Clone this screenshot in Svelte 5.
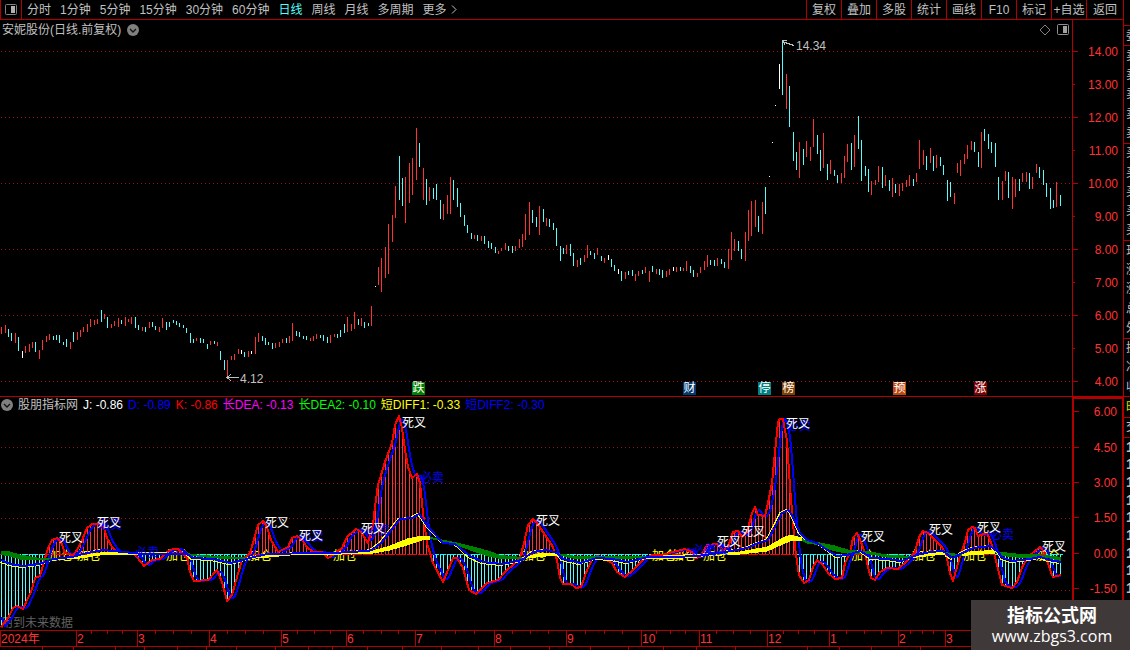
<script lang="ts">
	type Point = [number, number];

	const periods = ['分时', '1分钟', '5分钟', '15分钟', '30分钟', '60分钟', '日线', '周线', '月线', '多周期'];
	const tools = ['复权', '叠加', '多股', '统计', '画线', 'F10', '标记', '+自选', '返回'];
	let activePeriod = $state('日线');

	const WIDTH = 1072;
	const STEP = 3.426;
	const PRICE_TOP = 20;
	const PRICE_HEIGHT = 376;
	const IND_TOP = 397;
	const IND_HEIGHT = 233;
	const ZERO = 554;

	// r = up day, c = down day, w = unchanged; then the y of high and low
	const barData = `
		r327-334 r325-333 c329-337 c333-341 r333-343 c337-351 w351-358 r346-353 r344-352 r342-348
		c342-352 r350-359 r340-350 r336-342 r334-340 c336-340 c335-340 c335-343 c342-345 c339-347
		r342-349 c332-342 r332-340 r330-337 r327-332 r324-332 r319-327 r320-325 r319-324 c310-322
		r314-319 c317-328 r324-328 r321-326 r318-327 c320-324 r317-326 r319-322 r317-324 c317-328
		c325-330 r327-331 c327-332 r322-328 c322-327 c326-330 r327-332 r318-328 c322-330 c322-327
		c320-323 c321-325 c323-327 c325-328 c328-333 c333-343 c339-343 r338-341 c338-343 c339-343
		c344-349 r341-345 c341-344 r342-346 c351-360 c360-370 r360-376 r356-360 r354-360 r349-354
		w350-354 c352-357 r351-357 w351-354 r337-354 r333-342 c336-341 c338-345 c342-345 c343-349
		r343-348 r342-347 r339-343 c338-343 r336-343 r323-341 c331-336 c332-337 c336-339 c336-340
		r338-341 r336-341 r334-339 c335-338 c335-341 c337-343 r335-343 r334-337 c334-338 c330-337
		c324-333 r317-332 r324-331 r312-329 c319-325 r318-326 c322-328 c323-326 r306-326
		w286-287 r267-285 r258-292 r247-278 r224-274 r215-242 r186-218 c156-200 c178-206 r177-223
		r163-203 r158-195 r128-180 c143-167 r168-200 c179-205 r187-201 c188-199 c184-200 c200-219
		r204-220 r195-214 r177-214 c180-200 c188-207 c203-217 c215-226 c225-233 c233-239 r235-239
		c235-241 r236-241 c236-244 c241-248 c243-249 c247-253 r251-254 r248-251 r243-250 c246-251
		c246-253 r246-251 r239-248 r234-247 r214-240 r202-235 c210-223 c217-227 r206-235 c209-222
		r218-226 c219-227 c223-230 c228-246 c246-261 c248-254 r245-254 c244-256 c253-266 r260-267
		c258-265 r255-262 r245-258 c251-255 c253-259 r248-255 c256-261 r258-263 w255-260 c259-267
		c265-271 w269-274 c271-281 r272-279 c271-275 c270-276 r274-281 r271-276 c270-274 r267-273
		r271-282 c266-272 r269-274 c269-275 c270-278 r271-277 r269-275 w267-271 r267-272 c267-271
		r268-271 r261-271 c266-273 c270-277 r273-277 r267-273 r261-270 r255-267 c260-265 c260-266
		r258-266 c259-264 c262-268 r249-269 r232-260 r239-251 c241-251 c249-259 r232-261 r210-241
		r201-236 r200-227 c216-232 r202-234 c187-214 w176-177 w142-143 w105-106 w64-89 c42-95
		r74-109 c86-127 c132-161 c152-170 r142-178 c149-165 r141-157 r147-161 r119-147 c135-154
		c150-171 r133-168 c164-180 r160-174 c170-176 c175-183 r173-183 r156-178 r144-162 c143-170
		r135-167 c116-149 c140-181 c166-176 c169-192 r181-195 r180-185 r166-182 c167-188 r175-186
		c180-191 r178-197 c184-193 r184-196 r183-191 r180-187 r175-186 c179-186 r173-182 r140-169
		r150-165 c156-170 r148-163 c156-171 r155-168 c157-166 c165-175 c180-201 c182-197 r193-204
		r163-173 r160-176 r154-164 r145-159 r141-150 c142-152 c152-167 r132-168 c129-141 c134-149
		c142-153 c143-167 c177-200 r181-200 r171-181 c172-198 r177-209 r179-197 c179-191 r173-182
		r172-182 c173-189 r177-189 r164-173 c167-178 c170-185 c183-197 c188-209 c200-208 r182-207
		c195-206`;

	const bars = barData
		.trim()
		.split(/\s+/)
		.map((entry, i) => {
			const [high, low] = entry.slice(1).split('-').map(Number);
			return { kind: entry[0], x: Math.round(1.2 + i * STEP) + 0.5, high, low };
		});

	function parsePoints(text: string): Point[] {
		return text
			.trim()
			.split(/\s+/)
			.map((p) => p.split(',').map(Number) as Point);
	}

	const jLine = parsePoints(`
		1,627 8,618 13,608 17,606 23,609 27,600 31,592 35,578 40,576 43,565 48,548 52,540 57,538 61,542
		65,553 73,555 77,550 82,540 87,528 92,524 100,524 104,528 107,538 112,547 117,552 133,553 137,557
		144,566 152,560 160,559 167,552 173,549 178,549 187,558 190,572 194,581 208,580 217,570 222,582
		227,601 232,595 237,577 242,560 250,553 253,543 258,525 263,521 267,527 271,540 278,552 288,547
		292,538 297,536 302,540 307,547 313,552 322,552 328,558 333,555 342,548 347,537 356,529 361,532
		368,543 373,525 375,507 378,485 385,462 392,443 395,425 399,416 402,428 405,450 408,467 412,478
		417,474 420,483 423,513 427,543 433,563 443,582 448,570 453,558 457,558 463,568 469,590 476,594
		487,583 498,580 507,570 513,565 520,558 524,543 528,525 533,519 537,523 543,532 553,547 557,560
		560,578 563,584 571,584 576,588 581,587 587,570 592,560 597,556 605,559 612,563 617,572 625,577
		633,570 643,560 652,555 663,555 673,552 685,549 692,552 695,558 700,557 707,545 717,544 723,550
		728,547 733,532 738,531 742,537 747,532 752,513 755,507 758,515 765,516 768,503 772,483 775,452
		778,422 780,419 783,419 784,425 787,440 790,487 793,523 795,547 799,575 804,583 809,580 813,567
		817,560 823,565 828,573 835,579 842,578 845,563 850,553 853,538 857,533 861,542 865,553 868,567
		871,578 875,580 880,572 887,568 898,569 907,561 915,552 919,537 923,531 928,533 933,538 942,547
		947,558 950,573 953,581 957,567 961,553 965,542 968,530 972,527 975,528 978,536 987,533 992,545
		997,565 1002,585 1012,588 1017,582 1023,565 1030,555 1040,547 1045,553 1050,570 1053,577 1061,575`);

	const diffLine = parsePoints(`
		1,560 10,564 23,566 33,565 43,563 53,559 72,557 87,553 103,550 133,553 143,554 187,554 193,558
		213,559 230,563 240,561 250,558 267,554 317,553 333,553 367,551 372,550 382,542 400,519 412,518
		419,514 428,527 443,543 455,544 470,556 483,562 503,564 522,560 533,552 547,550 557,553 563,559
		580,563 597,558 613,559 627,562 633,561 648,557 673,557 697,556 720,553 747,548 758,543 768,540
		775,527 782,513 788,510 792,515 800,533 807,540 817,543 827,550 837,556 847,555 860,551 872,558
		887,559 902,561 917,555 930,552 943,551 948,555 953,558 962,553 973,548 990,546 998,552 1003,558
		1013,561 1030,559 1040,557 1050,560 1061,562`);

	// x, centre y, thickness
	const bands = [
		{ kind: 'falling', data: '1,553,3 10,554,4 20,557,4 37,559,2 52,559,1' },
		{ kind: 'rising', data: '52,559,1 80,557,2 100,554,2 127,553,2 187,554,1' },
		{ kind: 'falling', data: '187,554,1 200,556,1 230,558,2 247,558,1' },
		{ kind: 'rising', data: '247,558,1 263,556,3 290,554,2 333,554,1 350,553,1 373,552,2 390,548,4 407,542,6 422,538,4 430,538,2' },
		{ kind: 'falling', data: '430,538,1 440,540,1 457,544,2 473,549,4 490,554,5 500,557,3 522,558,1' },
		{ kind: 'rising', data: '522,558,1 540,555,3 557,554,2' },
		{ kind: 'falling', data: '557,554,1 573,557,2 593,558,2 653,557,1' },
		{ kind: 'rising', data: '653,557,1 703,555,2 740,553,2 767,549,4 783,541,6 790,538,6 802,539,2' },
		{ kind: 'falling', data: '802,540,1 807,542,2 820,544,2 833,548,5 850,552,3 870,553,2 887,556,2 913,557,1' },
		{ kind: 'rising', data: '913,557,1 930,554,3 945,553,2' },
		{ kind: 'falling', data: '945,553,1 955,555,2 962,555,1' },
		{ kind: 'rising', data: '962,555,1 973,553,3 995,552,3' },
		{ kind: 'falling', data: '995,552,1 1003,554,3 1020,556,3 1040,556,2 1050,557,2 1061,559,3' }
	];

	function valueAt(line: Point[], x: number): number {
		if (x <= line[0][0]) return line[0][1];
		for (let i = 1; i < line.length; i++) {
			const [x1, y1] = line[i];
			if (x <= x1) {
				const [x0, y0] = line[i - 1];
				return y0 + ((y1 - y0) * (x - x0)) / (x1 - x0);
			}
		}
		return line[line.length - 1][1];
	}

	function toPath(line: Point[]): string {
		return 'M' + line.map(([x, y]) => x + ' ' + y).join('L');
	}

	function bandPath(data: string): string {
		const rows = data.split(' ').map((p) => p.split(',').map(Number));
		const upper = rows.map(([x, y, t]) => x + ' ' + (y - t / 2 - 0.5));
		const lower = rows.map(([x, y, t]) => x + ' ' + (y + t / 2 + 0.5)).reverse();
		return 'M' + [...upper, ...lower].join('L') + 'Z';
	}

	// D is J smoothed over the previous bars
	const dLine: Point[] = [];
	for (let x = 1; x <= 1061; x += 2) {
		const taps = [2, 3, 4, 5, 6].map((lag) => valueAt(jLine, x - lag));
		dLine.push([x, x < 5 ? 617 + x : taps.reduce((a, b) => a + b) / taps.length]);
	}
	const diffFast = diffLine.map(([x, y]) => [x - 2, y > ZERO ? y + 1.5 : y - 0.5] as Point);
	const stems = bars.map(({ x }) => ({ x, y: valueAt(jLine, x) }));

	const priceTicks = Array.from({ length: 11 }, (_, i) => ({
		label: (14 - i).toFixed(2),
		y: 51 + i * 33,
		major: i % 2 === 0
	}));
	const indTicks = [6, 4.5, 3, 1.5, 0, -1.5].map((v, i) => ({
		label: v.toFixed(2),
		y: [411, 447, 483, 518, 554, 590][i]
	}));

	const badges = [
		{ text: '跌', x: 412, color: '#008000' },
		{ text: '财', x: 683, color: '#003a70' },
		{ text: '停', x: 758, color: '#008080' },
		{ text: '榜', x: 782, color: '#804000' },
		{ text: '预', x: 893, color: '#c04810' },
		{ text: '涨', x: 974, color: '#800000' }
	];

	const legend = [
		{ text: 'J: -0.86', color: '#ffffff' },
		{ text: 'D: -0.89', color: '#0000ff' },
		{ text: 'K: -0.86', color: '#ff0000' },
		{ text: '长DEA: -0.13', color: '#ff00ff' },
		{ text: '长DEA2: -0.10', color: '#00ff00' },
		{ text: '短DIFF1: -0.33', color: '#ffff00' },
		{ text: '短DIFF2: -0.30', color: '#0000ff' }
	];

	const addSignals = parsePoints('49,549 77,549 166,549 248,549 333,549 522,549 652,549 672,549 703,549 851,549 912,549 963,549 1036,549');
	const signals = [
		{ text: '必卖', kind: 'sell', at: parsePoints('98,518 135,546 300,530 366,524 420,471 692,544 704,543 787,419 990,528') },
		{ text: '死叉', kind: 'cross', at: parsePoints('59,531 97,516 265,516 299,529 361,522 402,416 536,514 717,535 741,525 786,417 861,530 929,523 977,521 1042,540') }
	];

	const months = [
		{ text: '2024年', x: 0 },
		{ text: '2', x: 76 },
		{ text: '3', x: 137 },
		{ text: '4', x: 209 },
		{ text: '5', x: 281 },
		{ text: '6', x: 346 },
		{ text: '7', x: 415 },
		{ text: '8', x: 494 },
		{ text: '9', x: 566 },
		{ text: '10', x: 641 },
		{ text: '11', x: 699 },
		{ text: '12', x: 767 },
		{ text: '1', x: 829 },
		{ text: '2', x: 898 },
		{ text: '3', x: 945 },
		{ text: '', x: 1072 }
	];
	const minorTicks = months
		.slice(1)
		.flatMap(({ x }, i) => [0.25, 0.5, 0.75].map((f) => Math.round(months[i].x + (x - months[i].x) * f)))
		.filter((x) => x > 76);
	const footTicks = [42, 73, 115, 144, 177, 206, 236, 275, 308, 332, 367, 402, 441, 478, 510, 549, 590, 628, 663, 696, 735, 807, 839, 871, 920];

	const quoteGroups = [
		{ size: 1, rows: ['委'] },
		{ size: 5, rows: ['卖', '卖', '卖', '卖', '卖'] },
		{ size: 5, rows: ['买', '买', '买', '买', '买'] },
		{ size: 5, rows: ['现', '涨', '涨', '总', '外'] },
		{ size: 3, rows: ['换', '净', '收'] }
	];

	const left = (x: number) => (x / WIDTH) * 100 + '%';
	const priceY = (y: number) => ((y - PRICE_TOP) / PRICE_HEIGHT) * 100 + '%';
	const indY = (y: number) => ((y - IND_TOP) / IND_HEIGHT) * 100 + '%';
</script>

<div class="app">
	<main class="main">
		<nav class="toolbar">
			<button class="layout-button" aria-label="布局">
				<svg width="12" height="11" viewBox="0 0 12 11">
					<rect x="0.5" y="0.5" width="11" height="10" rx="1" fill="none" stroke="#808080" />
					<rect x="6" y="2" width="4" height="7" fill="#b0b0b0" />
				</svg>
			</button>
			<div class="periods">
				{#each periods as period}
					<button class:active={period === activePeriod} onclick={() => (activePeriod = period)}>{period}</button>
				{/each}
				<button class="more">
					更多
					<svg width="6" height="9" viewBox="0 0 6 9"><path d="M1 0.5L5 4.5L1 8.5" fill="none" stroke="#c0c0c0" /></svg>
				</button>
			</div>
			<div class="tools">
				{#each tools as tool}
					<button>{tool}</button>
				{/each}
			</div>
		</nav>

		<section class="panel price">
			<div class="plot">
				<svg class="chart" viewBox="0 {PRICE_TOP} {WIDTH} {PRICE_HEIGHT}" preserveAspectRatio="none">
					{#each priceTicks.filter((t) => t.major) as tick}
						<line class="grid" x1="1" x2={WIDTH} y1={tick.y + 0.5} y2={tick.y + 0.5} />
					{/each}
					{#each bars as bar}
						<line class="bar {bar.kind}" x1={bar.x} x2={bar.x} y1={bar.high} y2={bar.low} />
					{/each}
					<path class="pointer" d="M782 41.5L794 45.5M782 40.5H787M784 42V45" />
					<path class="pointer" d="M228 377.5H239M231 374.5L227 377.5L231 380.5" />
				</svg>
				<header class="title">
					<span>安妮股份(日线.前复权)</span>
					<button class="round" aria-label="展开">
						<svg width="12" height="12" viewBox="0 0 12 12">
							<circle cx="6" cy="6" r="6" fill="#808080" />
							<path d="M3 5L6 8L9 5" fill="none" stroke="#111" stroke-width="1.3" />
						</svg>
					</button>
					<svg class="corner" width="30" height="12" viewBox="0 0 30 12">
						<path d="M6 1L11 6L6 11L1 6Z" fill="none" stroke="#808080" />
						<rect x="18.5" y="0.5" width="11" height="10" rx="1" fill="none" stroke="#909090" />
						<rect x="24" y="2" width="4" height="7" fill="#a0a0a0" />
					</svg>
				</header>
				<span class="mark" style="left: {left(796)}; top: {priceY(46)}">14.34</span>
				<span class="mark" style="left: {left(240)}; top: {priceY(379)}">4.12</span>
				{#each badges as badge}
					<span class="badge" style="left: {left(badge.x)}; background: {badge.color}">{badge.text}</span>
				{/each}
			</div>
			<div class="axis">
				{#each priceTicks as tick}
					<span class="tick" class:minor={!tick.major} style="top: {priceY(tick.y + 0.5)}">{tick.label}</span>
				{/each}
			</div>
		</section>

		<section class="panel indicator">
			<div class="plot">
				<span class="notice">用到未来数据</span>
				{#each addSignals as [x, y]}
					<span class="signal add" style="left: {left(x)}; top: {indY(y)}">加仓</span>
				{/each}
				<svg class="chart" viewBox="0 {IND_TOP} {WIDTH} {IND_HEIGHT}" preserveAspectRatio="none">
					{#each indTicks as tick}
						{#if tick.y !== 411 && tick.y !== ZERO}
							<line class="grid" x1="1" x2={WIDTH} y1={tick.y + 0.5} y2={tick.y + 0.5} />
						{/if}
					{/each}
					{#each stems as stem}
						<line class="stem" class:below={stem.y > ZERO} x1={stem.x} x2={stem.x} y1={ZERO} y2={stem.y} />
					{/each}
					<line class="zero" x1="0" x2="1062" y1={ZERO + 0.5} y2={ZERO + 0.5} />
					{#each stems.filter((s) => s.y > ZERO + 1) as stem}
						<line class="zero-below" x1={stem.x - 1} x2={stem.x + 2} y1={ZERO + 0.5} y2={ZERO + 0.5} />
					{/each}
					<path class="d-line" d={toPath(dLine)} />
					<path class="j-line" d={toPath(jLine)} />
					{#each bands as band}
						<path class={band.kind} d={bandPath(band.data)} />
					{/each}
					<path class="diff-fast" d={toPath(diffFast)} />
					<path class="diff-slow" d={toPath(diffLine)} />
				</svg>
				{#each signals as signal}
					{#each signal.at as [x, y]}
						<span class="signal {signal.kind}" style="left: {left(x)}; top: {indY(y)}">{signal.text}</span>
					{/each}
				{/each}
				<header class="legend">
					<button class="round" aria-label="指标">
						<svg width="12" height="12" viewBox="0 0 12 12">
							<circle cx="6" cy="6" r="6" fill="#808080" />
							<path d="M3 5L6 8L9 5" fill="none" stroke="#111" stroke-width="1.3" />
						</svg>
					</button>
					<span>股朋指标网</span>
					{#each legend as item}
						<span style="color: {item.color}">{item.text}</span>
					{/each}
				</header>
			</div>
			<div class="axis framed">
				{#each indTicks as tick}
					<span class="tick" style="top: {indY(tick.y - 1)}">{tick.label}</span>
				{/each}
			</div>
		</section>

		<div class="timeline">
			<div class="months">
				{#each minorTicks as x}
					<i style="left: {left(x)}"></i>
				{/each}
				{#each months as month}
					<span class="month" style="left: {left(month.x)}">{month.text}</span>
				{/each}
			</div>
		</div>
		<div class="foot">
			{#each footTicks as x}
				<i style="left: {left(x)}"></i>
			{/each}
		</div>
	</main>

	<aside class="quotes">
		<div class="quote-head"></div>
		{#each quoteGroups as group}
			<div class="group" style="flex-grow: {group.size}">
				{#each group.rows as row}
					<span>{row}</span>
				{/each}
			</div>
		{/each}
		<div class="group tab" style="flex-grow: 1"><span>时</span></div>
		<div class="group" style="flex-grow: 1"><span>交</span></div>
		<div class="group times" style="flex-grow: 11">
			{#each Array(12) as _}
				<span>1</span>
			{/each}
		</div>
	</aside>

	<a class="watermark" href="#top">
		<strong>指标公式网</strong>
		<span>www.zbgs3.com</span>
	</a>
</div>

<style>
	:global(body) {
		margin: 0;
		background: #000;
	}

	.app {
		display: flex;
		min-height: 100vh;
		position: relative;
		overflow: hidden;
		background: #000;
		color: #c0c0c0;
		font-family: 'Liberation Sans', 'Noto Sans CJK SC', sans-serif;
		font-size: 12px;
		line-height: 14px;
		white-space: nowrap;
	}

	button {
		padding: 0;
		border: none;
		background: none;
		color: inherit;
		font: inherit;
		cursor: pointer;
	}

	svg {
		display: block;
	}

	.main {
		flex: 1;
		min-width: 0;
		display: flex;
		flex-direction: column;
	}

	.toolbar {
		display: flex;
		height: 19px;
		border-bottom: 1px solid #b00000;
	}

	.layout-button {
		display: flex;
		align-items: center;
		justify-content: center;
		width: 22px;
		box-sizing: border-box;
		border: 1px solid #b00000;
		border-width: 0 1px;
	}

	.periods {
		display: flex;
		align-items: center;
		gap: 9px;
		padding-left: 5px;
	}

	.active {
		color: #54fcfc;
	}

	.more {
		display: flex;
		align-items: center;
		gap: 4px;
	}

	.tools {
		display: flex;
		margin-left: auto;
	}

	.tools button {
		width: 35px;
		box-sizing: border-box;
		border-left: 1px solid #b00000;
	}

	.tools button:last-child {
		width: 37px;
	}

	.panel {
		display: flex;
		min-height: 0;
	}

	.price {
		flex: 376 1 0;
		border-bottom: 1px solid #b00000;
	}

	.indicator {
		flex: 233 1 0;
	}

	.plot {
		flex: 1;
		min-width: 0;
		position: relative;
	}

	.chart {
		position: absolute;
		inset: 0;
		width: 100%;
		height: 100%;
		shape-rendering: crispEdges;
	}

	.grid {
		stroke: #a01010;
		stroke-dasharray: 1 3;
	}

	.bar.r {
		stroke: #ff3232;
	}

	.bar.c {
		stroke: #54fcfc;
	}

	.bar.w {
		stroke: #fff;
	}

	.pointer {
		fill: none;
		stroke: #c0c0c0;
	}

	.title,
	.legend {
		position: absolute;
		top: 0;
		left: 0;
		right: 0;
		display: flex;
		align-items: center;
	}

	.title {
		gap: 6px;
		height: 19px;
		padding: 0 3px 0 2px;
	}

	.corner {
		margin-left: auto;
	}

	.legend {
		gap: 5px;
		height: 16px;
		padding-left: 1px;
	}

	.mark {
		position: absolute;
		transform: translateY(-50%);
	}

	.badge {
		position: absolute;
		bottom: 1px;
		width: 13px;
		height: 13px;
		line-height: 13px;
		text-align: center;
		color: #fff;
	}

	.axis {
		position: relative;
		width: 50px;
		border-left: 1px solid #b00000;
		color: #ff3232;
	}

	.axis.framed {
		width: 48px;
		border: 2px solid #b00000;
		border-width: 2px 1px 0 2px;
	}

	.tick {
		position: absolute;
		left: 0;
		right: 5px;
		transform: translateY(-50%);
		text-align: right;
	}

	.tick::before {
		content: '';
		position: absolute;
		left: 0;
		top: 6px;
		width: 5px;
		height: 1px;
		background: #b00000;
	}

	.tick.minor::before {
		width: 2px;
	}

	.stem {
		stroke: #ff3232;
	}

	.stem.below {
		stroke: #54fcfc;
	}

	.zero {
		stroke: #ff0000;
		stroke-dasharray: 10 1;
	}

	.zero-below {
		stroke: #00ffff;
	}

	.d-line,
	.j-line,
	.diff-fast,
	.diff-slow {
		fill: none;
		stroke-width: 2px;
		stroke-linejoin: round;
	}

	.d-line,
	.diff-slow {
		stroke: #0000ff;
	}

	.j-line {
		stroke: #ff0000;
	}

	.diff-fast {
		stroke: #ffff00;
		stroke-width: 1px;
	}

	.rising {
		fill: #ffff00;
	}

	.falling {
		fill: #008000;
	}

	.signal {
		position: absolute;
	}

	.add {
		color: #ffff00;
	}

	.sell {
		color: #0000ff;
	}

	.cross {
		color: #fff;
	}

	.notice {
		position: absolute;
		left: 1px;
		bottom: 0;
		color: #606060;
	}

	.timeline {
		height: 15px;
		border: 1px solid #b00000;
		border-width: 1px 0;
		color: #ff3232;
	}

	.months {
		position: relative;
		height: 100%;
		margin-right: 51px;
	}

	.month {
		position: absolute;
		height: 100%;
		line-height: 16px;
		border-left: 1px solid #b00000;
	}

	.months i {
		position: absolute;
		width: 1px;
		height: 3px;
		background: #b00000;
	}

	.foot {
		position: relative;
		height: 3px;
		margin-right: 51px;
	}

	.foot i {
		position: absolute;
		width: 1px;
		height: 3px;
		background: #b00000;
	}

	.quotes {
		display: flex;
		flex-direction: column;
		width: 6px;
		overflow: hidden;
		border-left: 1px solid #b00000;
	}

	.quote-head {
		height: 25px;
	}

	.group {
		flex-basis: 0;
		display: flex;
		flex-direction: column;
		justify-content: space-around;
		min-height: 0;
		padding-left: 2px;
		border-top: 1px solid #b00000;
	}

	.group span {
		flex: 1;
		display: flex;
		align-items: center;
		min-height: 0;
	}

	.tab {
		color: #e0e000;
	}

	.times {
		font-size: 14px;
		font-weight: bold;
	}

	.watermark {
		position: absolute;
		right: 0;
		bottom: 0;
		display: flex;
		flex-direction: column;
		align-items: center;
		justify-content: center;
		box-sizing: border-box;
		width: 159px;
		height: 50px;
		padding-left: 3px;
		background: #3f3939;
		color: #fff;
		text-decoration: none;
	}

	.watermark strong {
		font-size: 18px;
		line-height: 22px;
	}

	.watermark span {
		font-family: 'Open Sans', 'Noto Sans', sans-serif;
		font-size: 16px;
		line-height: 18px;
	}
</style>
